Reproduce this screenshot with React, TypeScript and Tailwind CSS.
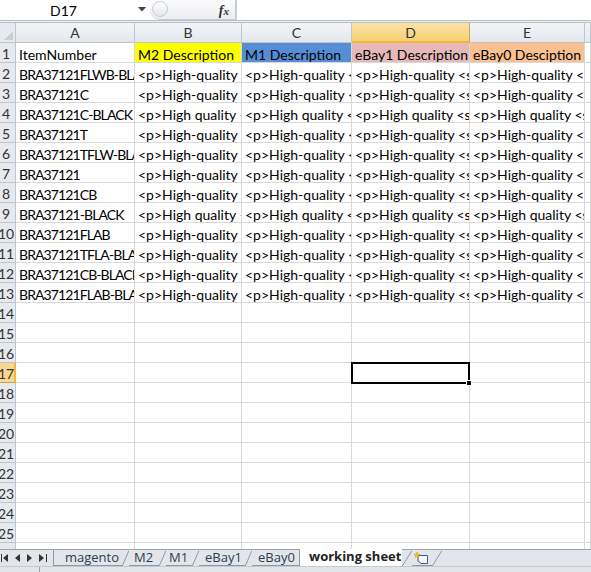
import React from "react";

const cellFont = { fontFamily: "Lato, 'Open Sans', sans-serif" };
const tabFont = { fontFamily: "'Open Sans', sans-serif" };

type Row = [string, string, string, string, string];

const hq = "<p>High-quality <strong>Brand new</strong> replacement part</p>";
const hq2 = "<p>High quality <strong>Brand new</strong> replacement part</p>";

const rows: Row[] = [
  ["ItemNumber", "M2 Description", "M1 Description", "eBay1 Description", "eBay0 Desciption"],
  ["BRA37121FLWB-BLACK", hq, hq, hq, hq],
  ["BRA37121C", hq, hq, hq, hq],
  ["BRA37121C-BLACK", hq2, hq2, hq2, hq2],
  ["BRA37121T", hq, hq, hq, hq],
  ["BRA37121TFLW-BLACK", hq, hq, hq, hq],
  ["BRA37121", hq, hq, hq, hq],
  ["BRA37121CB", hq, hq, hq, hq],
  ["BRA37121-BLACK", hq2, hq2, hq2, hq2],
  ["BRA37121FLAB", hq, hq, hq, hq],
  ["BRA37121TFLA-BLACK", hq, hq, hq, hq],
  ["BRA37121CB-BLACK", hq, hq, hq, hq],
  ["BRA37121FLAB-BLACK", hq, hq, hq, hq],
];

const headerFill = ["", "bg-[#ffff00]", "bg-[#558ed5]", "bg-[#e6b9b8]", "bg-[#fac090]"];
const colLetters = ["A", "B", "C", "D", "E", ""];
const gridCols = "grid grid-cols-[16px_119px_107px_110px_118px_115px_1fr]";

function ColHeader({ letter, active }: { letter: string; active: boolean }) {
  return (
    <div
      className={
        active
          ? "h-[20px] flex items-center justify-center border-r border-b-2 border-r-[#c9a35a] border-b-[#f2b63c] bg-gradient-to-b from-[#fbe3a6] to-[#f6cf72] text-[14px] text-[#333]"
          : "h-[20px] flex items-center justify-center border-r border-b border-[#bfc5cc] bg-gradient-to-b from-[#f3f5f8] to-[#e3e7ec] text-[14px] text-[#333]"
      }
    >
      {letter}
    </div>
  );
}

function RowHeader({ n, active }: { n: number; active: boolean }) {
  return (
    <div
      className={
        active
          ? "h-[20px] flex items-center pt-[2px] border-r-2 border-b border-r-[#f2b63c] border-b-[#c9a35a] bg-[#f8d891] text-[14px] text-[#333] overflow-hidden"
          : "h-[20px] flex items-center pt-[2px] border-r border-b border-[#bfc5cc] bg-[#e6e9ed] text-[14px] text-[#333] overflow-hidden"
      }
    >
      <span className="w-[12px] flex justify-center whitespace-nowrap">{n}</span>
    </div>
  );
}

function Cell({
  text,
  fill,
  selected,
  tight,
}: {
  text?: string;
  fill?: string;
  selected?: boolean;
  tight?: boolean;
}) {
  return (
    <div className={`relative h-[20px] border-r border-b border-[#d9d9d9] ${fill ?? "bg-white"}`}>
      <div
        className={`h-full overflow-hidden whitespace-nowrap pl-[3px] pt-[2px] text-[14px] leading-[19px] text-black ${
          tight ? "tracking-[-0.9px]" : ""
        }`}
      >
        {text}
      </div>
      {selected && (
        <>
          <div className="absolute z-10 left-[-1px] top-[-1px] right-[-1px] bottom-[-2px] border-2 border-black pointer-events-none" />
          <div className="absolute z-20 right-[-3px] bottom-[-4px] w-[6px] h-[6px] bg-black border border-white" />
        </>
      )}
    </div>
  );
}

function Slant({ w = 7 }: { w?: number }) {
  return (
    <svg width={w} height="17" viewBox={`0 0 ${w} 17`} className="shrink-0 block">
      <line x1="0" y1="16.5" x2={w} y2="0.5" stroke="#8e98a4" strokeWidth="1" />
    </svg>
  );
}

function NewSheetIcon() {
  return (
    <svg width="18" height="14" viewBox="0 0 18 14">
      <path d="M5 4.5 H14.5 V12.5 H8 L5 10 Z" fill="#f4f6f9" stroke="#3d5d86" strokeWidth="1" />
      <path
        d="M4 1 L4.8 3 L7 3.2 L5.3 4.4 L5.8 6.5 L4 5.3 L2.2 6.5 L2.7 4.4 L1 3.2 L3.2 3 Z"
        fill="#f5c400"
        stroke="#d99a00"
        strokeWidth="0.5"
      />
    </svg>
  );
}

function Tab({ label, w, pl }: { label: string; w: string; pl: string }) {
  return (
    <div className={`${w} ${pl} flex items-center border-b border-[#8e98a4] leading-none whitespace-nowrap`}>
      {label}
    </div>
  );
}

export default function App() {
  const totalRows = 26;
  return (
    <div className="w-[591px] h-[572px] overflow-hidden bg-white flex flex-col" style={cellFont}>
      {/* formula bar */}
      <div className="h-[20px] flex items-stretch bg-white shrink-0">
        <div className="w-[150px] relative flex items-center">
          <span className="absolute left-[50px] text-[14px] text-black">D17</span>
          <svg width="8" height="5" viewBox="0 0 8 5" className="absolute left-[138px] top-[7px]">
            <path d="M0 0 H8 L4 4.5 Z" fill="#404040" />
          </svg>
        </div>
        <div className="w-[86px] relative flex items-center border border-l-0 border-t-0 border-[#c8ccd2] rounded-bl-[10px] rounded-tl-[10px] bg-gradient-to-b from-[#fbfbfc] to-[#eceef1]">
          <div className="absolute left-[2px] top-[1px] w-[16px] h-[16px] rounded-full border border-[#c8ccd2] bg-gradient-to-b from-white to-[#e4e6ea]" />
          <span
            className="absolute right-[6px] top-[0px] text-[14px] italic font-bold text-[#333]"
            style={{ fontFamily: "'Liberation Serif', serif" }}
          >
            f<span className="text-[11px]">x</span>
          </span>
        </div>
        <div className="flex-1 border-l border-[#c8ccd2] bg-white" />
      </div>
      <div className="h-[3px] shrink-0 border-t border-b border-[#b9bec5] bg-[#eef0f3]" />

      {/* sheet grid */}
      <div className="flex-1 overflow-hidden">
        <div className={gridCols}>
          <div className="h-[20px] border-r border-b border-[#bfc5cc] bg-[#e6e9ed] relative overflow-hidden">
            <svg width="16" height="20" viewBox="0 0 16 20" className="absolute inset-0">
              <path d="M4 17 H13 V8 Z" fill="#c9ced5" />
            </svg>
          </div>
          {colLetters.map((l, i) => (
            <ColHeader key={i} letter={l} active={l === "D"} />
          ))}
        </div>
        {Array.from({ length: totalRows }, (_, r) => {
          const n = r + 1;
          const data = rows[r];
          return (
            <div key={n} className={gridCols}>
              <RowHeader n={n} active={n === 17} />
              {[0, 1, 2, 3, 4, 5].map((c) => (
                <Cell
                  key={c}
                  text={data && c < 5 ? data[c] : undefined}
                  fill={n === 1 && c > 0 && c < 5 ? headerFill[c] : undefined}
                  selected={n === 17 && c === 3}
                  tight={c === 0 && n > 1}
                />
              ))}
            </div>
          );
        })}
      </div>

      {/* sheet tabs */}
      <div
        className="h-[17px] shrink-0 flex items-stretch bg-[#e2e6eb] border-t border-[#9aa3ae] text-[13px] text-[#2e3b4e]"
        style={tabFont}
      >
        <div className="w-[54px] shrink-0 flex items-center gap-[6px] pl-[1px] border-r border-[#8e98a4]">
          <svg width="8" height="8" viewBox="0 0 8 8">
            <path d="M0.5 0 V8" stroke="#333" />
            <path d="M7 0 L2 4 L7 8 Z" fill="#333" />
          </svg>
          <svg width="6" height="8" viewBox="0 0 6 8">
            <path d="M5 0 L0 4 L5 8 Z" fill="#333" />
          </svg>
          <svg width="6" height="8" viewBox="0 0 6 8">
            <path d="M0 0 L5 4 L0 8 Z" fill="#333" />
          </svg>
          <svg width="8" height="8" viewBox="0 0 8 8">
            <path d="M7.5 0 V8" stroke="#333" />
            <path d="M0 0 L5 4 L0 8 Z" fill="#333" />
          </svg>
        </div>
        <Tab label="magento" w="w-[68px]" pl="pl-[11px]" />
        <Slant />
        <Tab label="M2" w="w-[30px]" pl="pl-[5px]" />
        <Slant />
        <Tab label="M1" w="w-[26px]" pl="pl-[3px]" />
        <Slant />
        <Tab label="eBay1" w="w-[46px]" pl="pl-[6px]" />
        <Slant />
        <Tab label="eBay0" w="w-[47px]" pl="pl-[6px]" />
        <div className="w-[103px] shrink-0 -mt-[3px] pl-[9px] flex items-center bg-white border-l border-[#8e98a4] font-bold text-[#222] leading-none whitespace-nowrap">
          working sheet
        </div>
        <Slant w={10} />
        <div className="w-[20px] shrink-0 flex items-center justify-center border-b border-[#8e98a4]">
          <NewSheetIcon />
        </div>
        <Slant w={10} />
        <div className="flex-1" />
      </div>
      <div className="h-[6px] shrink-0 flex bg-[#e2e6eb] border-t border-[#c3c9d0]">
        <div className="w-[40px] border-r border-[#9aa3ae]" />
      </div>
    </div>
  );
}
